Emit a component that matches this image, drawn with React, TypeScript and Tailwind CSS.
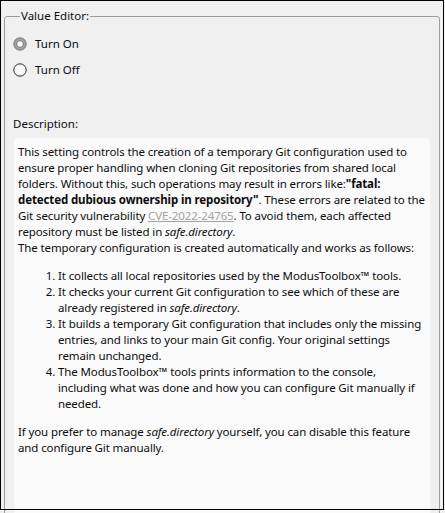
import React from 'react'

function Radio({ checked, label }: { checked?: boolean; label: string }) {
  return (
    <label className="flex items-center h-4 gap-[8px]">
      <svg width="14" height="14" viewBox="0 0 14 14" className="shrink-0">
        {checked ? (
          <>
            <circle cx="7" cy="7" r="6.2" fill="#a3a3a3" stroke="#6e6e6e" strokeWidth="0.9" />
            <circle cx="7" cy="7" r="3.4" fill="#f4f4f4" stroke="#6e6e6e" strokeWidth="0.9" />
          </>
        ) : (
          <circle cx="7" cy="7" r="6.2" fill="#f8f8f8" stroke="#2b2b2b" strokeWidth="1" />
        )}
      </svg>
      <span>{label}</span>
    </label>
  )
}

export default function App() {
  return (
    <div
      className="relative w-[445px] h-[513px] overflow-hidden bg-[#f0f0f0] text-[#0d0d0d] text-[11.5px] leading-4"
      style={{ fontFamily: '"Noto Sans", "Open Sans", sans-serif' }}
    >
      <fieldset className="mt-2 mx-1 w-[436px] h-[560px] border border-[#9d9d9d] rounded-[3px] px-[9px]">
        <legend className="ml-[6px] px-[1px] leading-4">Value Editor:</legend>

        <div className="mt-3 flex flex-col gap-[10px] ml-[-1px]">
          <Radio checked label="Turn On" />
          <Radio label="Turn Off" />
        </div>

        <div className="mt-[38px] -ml-px">Description:</div>

        <div className="mt-[6px] h-[400px] rounded-[4px] bg-[#fafafa] px-1 pt-[6px] tracking-[-0.12px]">
          <p>
            This setting controls the creation of a temporary Git configuration used to ensure proper
            handling when cloning Git repositories from shared local folders. Without this, such
            operations may result in errors like:
            <b className="font-bold">"fatal: detected dubious ownership in repository"</b>. These
            errors are related to the Git security vulnerability{' '}
            <a className="text-[#a3a3a3] underline">CVE-2022-24765</a>. To avoid them, each affected
            repository must be listed in <i>safe.directory</i>.
          </p>
          <p>The temporary configuration is created automatically and works as follows:</p>
          <ol className="list-decimal pl-10 my-[12px]">
            <li>It collects all local repositories used by the ModusToolbox™ tools.</li>
            <li>
              It checks your current Git configuration to see which of these are already registered
              in <i>safe.directory</i>.
            </li>
            <li>
              It builds a temporary Git configuration that includes only the missing entries, and
              links to your main Git config. Your original settings remain unchanged.
            </li>
            <li>
              The ModusToolbox™ tools prints information to the console, including what was done and
              how you can configure Git manually if needed.
            </li>
          </ol>
          <p>
            If you prefer to manage <i>safe.directory</i> yourself, you can disable this feature and
            configure Git manually.
          </p>
        </div>
      </fieldset>

      <div className="pointer-events-none absolute left-0 top-0 w-[444px] h-[510px] border border-black" />
    </div>
  )
}
